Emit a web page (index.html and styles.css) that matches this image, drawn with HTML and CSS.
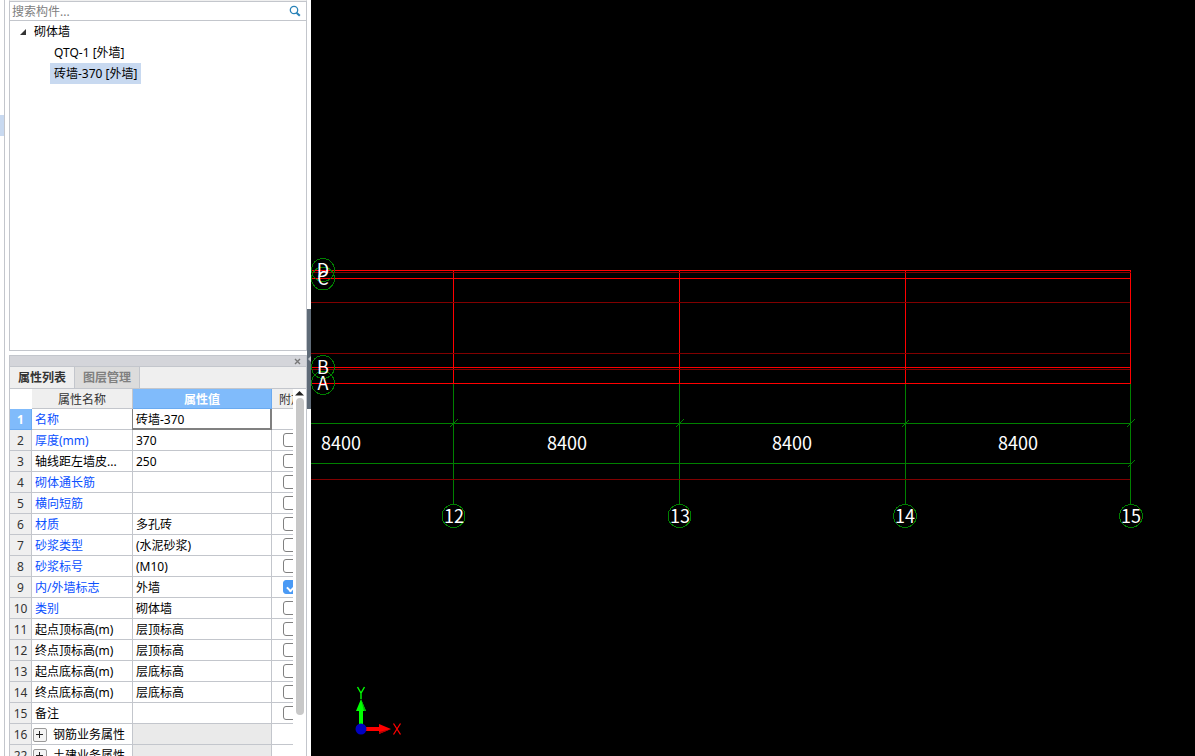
FILE: index.html
```html
<!DOCTYPE html>
<html lang="zh-CN">
<head>
<meta charset="utf-8">
<title>砌体墙</title>
<link rel="stylesheet" href="styles.css">
</head>
<body>
<div class="app">
  <div class="strip"><div class="strip-mark"></div></div>
  <aside class="side">
    <section class="browser">
      <div class="search">
        <input class="search-input" type="text" placeholder="搜索构件..." aria-label="搜索构件">
        <button class="search-button" type="button" aria-label="搜索">
          <svg width="12" height="12" viewBox="0 0 12 12"><circle cx="5" cy="5" r="3.7" fill="none" stroke="#2a83b8" stroke-width="1.3"/><path d="M7.5 7.7L10.8 10.8" stroke="#2a83b8" stroke-width="2"/></svg>
        </button>
      </div>
      <ul class="tree">
        <li class="root"><svg class="arrow" width="6" height="6" viewBox="0 0 6 6"><path d="M6 0V6H0Z" fill="#333"/></svg><span>砌体墙</span></li>
        <li class="leaf"><span>QTQ-1 [外墙]</span></li>
        <li class="leaf selected"><span>砖墙-370 [外墙]</span></li>
      </ul>
    </section>
    <section class="props">
      <div class="dock-bar">
        <button class="close" type="button" aria-label="关闭"><svg width="7" height="7" viewBox="0 0 7 7"><path d="M1 1L6 6M6 1L1 6" stroke="#777" stroke-width="1.4"/></svg></button>
      </div>
      <div class="tabs">
        <button class="tab active" type="button">属性列表</button>
        <button class="tab" type="button">图层管理</button>
      </div>
      <div class="sheet">
        <div class="sheet-view">
          <table class="grid">
            <colgroup><col class="c-num"><col class="c-name"><col class="c-value"><col class="c-extra"></colgroup>
            <thead><tr><th class="corner"></th><th>属性名称</th><th class="current">属性值</th><th class="extra">附加</th></tr></thead>
            <tbody>
              <tr><th class="current">1</th><td class="link">名称</td><td class="editing">砖墙-370</td><td></td></tr>
              <tr><th>2</th><td class="link">厚度(mm)</td><td>370</td><td><input type="checkbox" class="check" aria-label="厚度(mm)"></td></tr>
              <tr><th>3</th><td>轴线距左墙皮...</td><td>250</td><td><input type="checkbox" class="check" aria-label="轴线距左墙皮"></td></tr>
              <tr><th>4</th><td class="link">砌体通长筋</td><td></td><td><input type="checkbox" class="check" aria-label="砌体通长筋"></td></tr>
              <tr><th>5</th><td class="link">横向短筋</td><td></td><td><input type="checkbox" class="check" aria-label="横向短筋"></td></tr>
              <tr><th>6</th><td class="link">材质</td><td>多孔砖</td><td><input type="checkbox" class="check" aria-label="材质"></td></tr>
              <tr><th>7</th><td class="link">砂浆类型</td><td>(水泥砂浆)</td><td><input type="checkbox" class="check" aria-label="砂浆类型"></td></tr>
              <tr><th>8</th><td class="link">砂浆标号</td><td>(M10)</td><td><input type="checkbox" class="check" aria-label="砂浆标号"></td></tr>
              <tr><th>9</th><td class="link">内/外墙标志</td><td>外墙</td><td><input type="checkbox" class="check" aria-label="内/外墙标志" checked></td></tr>
              <tr><th>10</th><td class="link">类别</td><td>砌体墙</td><td><input type="checkbox" class="check" aria-label="类别"></td></tr>
              <tr><th>11</th><td>起点顶标高(m)</td><td>层顶标高</td><td><input type="checkbox" class="check" aria-label="起点顶标高(m)"></td></tr>
              <tr><th>12</th><td>终点顶标高(m)</td><td>层顶标高</td><td><input type="checkbox" class="check" aria-label="终点顶标高(m)"></td></tr>
              <tr><th>13</th><td>起点底标高(m)</td><td>层底标高</td><td><input type="checkbox" class="check" aria-label="起点底标高(m)"></td></tr>
              <tr><th>14</th><td>终点底标高(m)</td><td>层底标高</td><td><input type="checkbox" class="check" aria-label="终点底标高(m)"></td></tr>
              <tr><th>15</th><td>备注</td><td></td><td><input type="checkbox" class="check" aria-label="备注"></td></tr>
              <tr><th>16</th><td class="group"><div class="group-row"><button class="expand" type="button" aria-label="展开钢筋业务属性"><svg width="7" height="7" viewBox="0 0 7 7"><path d="M0 3.5H7M3.5 0V7" stroke="#222"/></svg></button><span>钢筋业务属性</span></div></td><td class="shaded"></td><td></td></tr>
              <tr><th>22</th><td class="group"><div class="group-row"><button class="expand" type="button" aria-label="展开土建业务属性"><svg width="7" height="7" viewBox="0 0 7 7"><path d="M0 3.5H7M3.5 0V7" stroke="#222"/></svg></button><span>土建业务属性</span></div></td><td class="shaded"></td><td></td></tr>
            </tbody>
          </table>
        </div>
        <div class="scroll">
          <svg width="9" height="8" viewBox="0 0 9 8"><path d="M4.5 2L9 6.5H0Z" fill="#222"/></svg>
          <div class="thumb"></div>
        </div>
      </div>
    </section>
  </aside>
  <div class="splitter"><button class="handle" type="button" aria-label="收起面板"><svg width="3" height="6" viewBox="0 0 3 6"><path d="M3 0V6L0 3Z" fill="#c3c8ce"/></svg></button></div>
  <main class="canvas">
    <svg class="drawing" viewBox="311 0 884 756" preserveAspectRatio="xMinYMin meet">
      <g class="axis">
        <path d="M453.5 383V504M679.5 383V504M905.5 383V504M1130.5 383V504M311 423.5H1131M311 463.5H1131"/>
        <path d="M450 427L458 419M676 427L684 419M902 427L909 420M1127 427L1135 419M1128 467L1135 460"/>
      </g>
      <g class="wall">
        <path d="M453.5 270V384M679.5 270V384M905.5 270V384M311 367.5H1130M311 383.5H1130M311 270.5H1131M311 278.5H1131M1130.5 270V384"/>
      </g>
      <g class="wall-dark">
        <path d="M311 272.5H1131M311 302.5H1130M311 353.5H1130M311 369.5H1130M311 479.5H1130"/>
      </g>
      <g class="axis">
        <circle cx="323" cy="270" r="11.5"/><circle cx="323" cy="278.5" r="11.5"/>
        <circle cx="323" cy="367" r="11.5"/><circle cx="323" cy="383" r="11.5"/>
        <circle cx="453.5" cy="516" r="11.5"/><circle cx="679.5" cy="516" r="11.5"/>
        <circle cx="905" cy="516" r="11.5"/><circle cx="1131" cy="516" r="11.5"/>
      </g>
      <g class="label">
        <text x="323" y="277">D</text><text x="323" y="285">C</text>
        <text x="323" y="374">B</text><text x="323" y="390">A</text>
        <text x="341" y="450">8400</text><text x="567" y="450">8400</text>
        <text x="792" y="450">8400</text><text x="1018" y="450">8400</text>
        <text x="454" y="523">12</text><text x="680" y="523">13</text>
        <text x="905" y="523">14</text><text x="1131" y="523">15</text>
      </g>
      <path d="M359 728V711H356L361 699L366 711H363V728Z" fill="#00ff00"/>
      <path d="M364 711H366L361 699Z" fill="#00b000"/>
      <path d="M365 727H379V724L391 729L379 734V731H365Z" fill="#ff0000"/>
      <path d="M379 732V734L391 729Z" fill="#b00000"/>
      <circle cx="361" cy="729" r="5.5" fill="#0000c0"/>
      <path d="M357.5 687L361 693L364.5 687M361 692V699" fill="none" stroke="#00ff00" stroke-width="1.4"/>
      <path d="M393.5 723.5L400.5 734.5M400.5 723.5L393.5 734.5" stroke="#ff0000" stroke-width="1.3"/>
    </svg>
  </main>
</div>
</body>
</html>
```

FILE: styles.css
```css
* { box-sizing: border-box; }
body {
  margin: 0;
  font: 12px/20px "Noto Sans", "Noto Sans CJK SC", sans-serif;
  color: #000;
  background: #fff;
}
button, input { font: inherit; margin: 0; padding: 0; border: 0; background: none; }
button { display: flex; align-items: center; justify-content: center; }

.app { display: flex; height: 100vh; overflow: hidden; }
.strip { flex: 0 0 5px; border-right: 1px solid #c3c6cc; padding-top: 115px; }
.strip-mark { height: 21px; background: #c8d9f0; }
.side { flex: 0 0 298px; min-width: 0; margin-left: 4px; display: flex; flex-direction: column; gap: 4px; min-height: 0; }

.browser { flex: 0 0 351px; border: 1px solid #c3c6cc; border-top-color: #f0f0f0; }
.search { display: flex; height: 20px; border-top: 1px solid #c3c6cc; border-bottom: 1px solid #c3c6cc; padding: 0 5px 0 2px; }
.search-input { flex: 1; min-width: 0; padding-top: 2px; outline: 0; line-height: 16px; }
.search-input::placeholder { color: #808080; opacity: 1; }
.search-button { width: 12px; }
.tree { list-style: none; margin: 0; padding: 0; line-height: 21px; }
.tree li { display: flex; align-items: center; height: 21px; }
.root { padding-left: 10px; gap: 8px; }
.leaf { padding-left: 40px; }
.leaf span { padding: 0 4px; }
.selected span { background: #c8d9f0; }

.props { flex: 1; min-height: 0; display: flex; flex-direction: column; border: 1px solid #c3c6cc; border-bottom: 0; }
.dock-bar { display: flex; flex: 0 0 11px; justify-content: flex-end; padding-right: 5px; background: #d4d5da; border-bottom: 1px solid #c3c6cc; }
.close { width: 7px; }
.tabs { display: flex; flex: 0 0 22px; background: #efefef; border-bottom: 1px solid #c3c6cc; }
.tab { width: 65px; font-weight: bold; color: #808080; background: #dcdcdc; border-right: 1px solid #c3c6cc; }
.tab.active { color: #333; background: #efefef; }

.sheet { display: flex; flex: 1; min-height: 0; }
.sheet-view { flex: 1; min-width: 0; overflow: hidden; }
.grid { width: 302px; table-layout: fixed; border-collapse: separate; border-spacing: 0; white-space: nowrap; }
.c-num { width: 22px; }
.c-name { width: 101px; }
.c-value { width: 139px; }
.c-extra { width: 40px; }
.grid th, .grid td { padding: 2px 0 0; height: 21px; line-height: 18px; border: solid #c3c6cc; border-width: 0 1px 1px 0; overflow: hidden; }
.grid th { font-weight: normal; color: #333; background: #efefef; }
.grid thead th { height: 20px; line-height: 17px; }
.grid .corner { background: #fff; border-color: #fff; }
.grid th.current { color: #fff; font-weight: bold; background: #80bbfb; border-color: #6aaaf0; }
.grid thead .extra { text-align: left; padding-left: 7px; }
.grid td { padding-left: 3px; }
.grid td:last-child { padding: 0 0 0 11px; }
.grid .link { color: #0a50ff; }
.grid .editing { border: solid #808080; border-width: 0 2px 2px 0; box-shadow: -1px 0 #808080; line-height: 17px; }
.grid .shaded { background: #eaeaea; }
.grid .group { padding-left: 1px; }
.group-row { display: flex; align-items: center; gap: 6px; }
.expand { width: 14px; height: 14px; padding: 0 1px 1px 0; border: 1px solid #999; border-radius: 2px; background: #f4f4f4; }
.check { display: block; appearance: none; width: 14px; height: 14px; border: 1px solid #808080; border-radius: 3px; background: #fff; }
.check:checked { display: flex; align-items: center; border-color: #4a9af5; background: #4a9af5; padding-left: 3px; }
.check:checked::after { content: ""; width: 8px; height: 4px; border: solid #fff; border-width: 0 0 2px 2px; transform: rotate(-45deg); }

.scroll { flex: 0 0 13px; display: flex; flex-direction: column; align-items: center; gap: 1px; }
.scroll svg { flex: none; }
.thumb { width: 8px; height: 317px; border-radius: 4px; background: #c8c8c8; }

.splitter { flex: 0 0 4px; padding-top: 309px; }
.handle { width: 4px; height: 100px; background: #5f6b78; }
.canvas { flex: 1; min-width: 0; background: #000; }
.drawing { display: block; width: 100%; height: 100%; }
.axis { fill: none; stroke: #008000; shape-rendering: crispEdges; }
.wall { stroke: #ff0000; shape-rendering: crispEdges; }
.wall-dark { stroke: #800000; shape-rendering: crispEdges; }
.label { fill: #fff; font: 18px "Noto Sans CJK SC", sans-serif; text-anchor: middle; }
```
